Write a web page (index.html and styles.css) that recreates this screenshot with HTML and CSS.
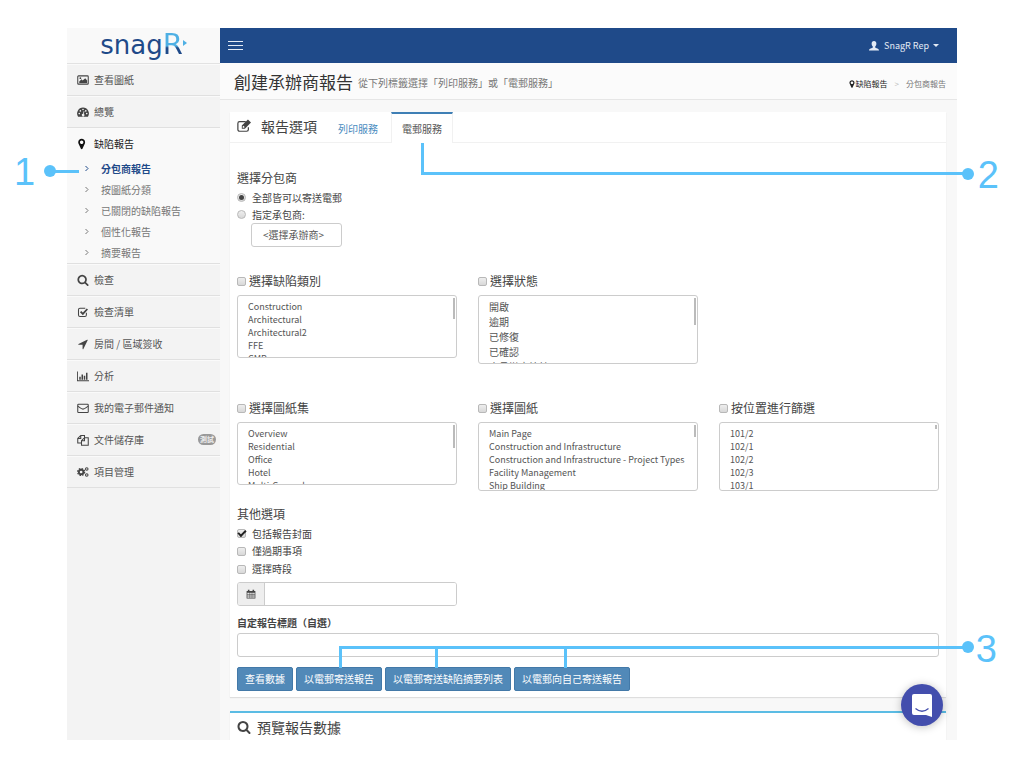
FILE: index.html
```html
<!DOCTYPE html>
<html lang="zh-Hant">
<head>
<meta charset="utf-8">
<title>snagR - 創建承辦商報告</title>
<link rel="stylesheet" href="styles.css">
</head>
<body>
<div class="stage">
  <div class="app">
    <aside class="sidebar">
      <a class="logo" href="#"><span class="logo-text">snag</span><span class="logo-r">R</span><svg class="logo-tip" viewBox="0 0 4 6"><path d="M0 0l4 3-4 3z"/></svg></a>
      <nav>
        <ul class="menu">
          <li><a class="menu-link" href="#"><svg class="icon line" viewBox="0 0 16 16"><rect x="1" y="2.5" width="14" height="11" rx="1"/><path class="solid" d="M3 12V10l3-3 1.500 1.500L11 5.500l2.500 3V12z"/><circle class="solid" cx="4.500" cy="5.500" r="1.200"/></svg>查看圖紙</a></li>
          <li><a class="menu-link" href="#"><svg class="icon" viewBox="0 0 16 16"><path fill-rule="evenodd" d="M8 2a8 8 0 0 0-6.600 12.300h13.200A8 8 0 0 0 8 2zM3 9a1.100 1.100 0 1 1 0 2.200A1.100 1.100 0 0 1 3 9zm1.500-3.600a1.100 1.100 0 1 1 0 2.200 1.100 1.100 0 0 1 0-2.200zM8 3.600a1.100 1.100 0 1 1 0 2.200 1.100 1.100 0 0 1 0-2.200zm1 3.200l.9.300-.9 3.400a1.700 1.700 0 1 1-1-.2zm2.700-1.400a1.100 1.100 0 1 1 0 2.200 1.100 1.100 0 0 1 0-2.200zM13 9a1.100 1.100 0 1 1 0 2.200A1.100 1.100 0 0 1 13 9z"/></svg>總覽</a></li>
          <li class="open">
            <a class="menu-link" href="#"><svg class="icon pin" viewBox="200 0 1792 1792"><path d="M1152 640q0-106-75-181t-181-75-181 75-75 181 75 181 181 75 181-75 75-181zm256 0q0 109-33 179l-364 774q-16 33-47.500 52t-67.500 19-67.500-19-46.500-52l-365-774q-33-70-33-179 0-212 150-362t362-150 362 150 150 362z"/></svg>缺陷報告</a>
            <ul class="submenu">
              <li><a class="current" href="#"><svg class="chev" viewBox="0 0 4 7"><path d="M.5 1l2.500 2.500L.5 6"/></svg>分包商報告</a></li>
              <li><a href="#"><svg class="chev" viewBox="0 0 4 7"><path d="M.5 1l2.500 2.500L.5 6"/></svg>按圖紙分類</a></li>
              <li><a href="#"><svg class="chev" viewBox="0 0 4 7"><path d="M.5 1l2.500 2.500L.5 6"/></svg>已關閉的缺陷報告</a></li>
              <li><a href="#"><svg class="chev" viewBox="0 0 4 7"><path d="M.5 1l2.500 2.500L.5 6"/></svg>個性化報告</a></li>
              <li><a href="#"><svg class="chev" viewBox="0 0 4 7"><path d="M.5 1l2.500 2.500L.5 6"/></svg>摘要報告</a></li>
            </ul>
          </li>
          <li><a class="menu-link" href="#"><svg class="icon" viewBox="0 0 1792 1792"><path d="M1216 832q0-185-131.500-316.500t-316.500-131.500-316.500 131.500-131.500 316.500 131.500 316.500 316.500 131.500 316.500-131.500 131.500-316.500zm512 832q0 52-38 90t-90 38q-54 0-90-38l-343-342q-179 124-399 124-143 0-273.500-55.500t-225-150-150-225-55.500-273.500 55.500-273.500 150-225 225-150 273.500-55.500 273.500 55.500 225 150 150 225 55.500 273.500q0 220-124 399l343 343q37 37 37 90z"/></svg>檢查</a></li>
          <li><a class="menu-link" href="#"><svg class="icon line" viewBox="0 0 16 16"><path d="M12.500 9v3a2 2 0 0 1-2 2H4a2 2 0 0 1-2-2V5a2 2 0 0 1 2-2h7"/><path class="thick" d="M4.800 7.500l3 3 6-6.500"/></svg>檢查清單</a></li>
          <li><a class="menu-link" href="#"><svg class="icon" viewBox="0 0 1792 1792"><path d="M1593 349l-640 1280q-17 35-57 35-5 0-15-2-22-5-35.500-22.500t-13.500-39.500v-576h-576q-22 0-39.500-13.500t-22.500-35.500 4-42 29-30l1280-640q13-7 29-7 27 0 45 19 15 14 18.500 34.500t-6.500 39.500z"/></svg>房間 / 區域簽收</a></li>
          <li><a class="menu-link" href="#"><svg class="icon" viewBox="0 0 16 16"><path d="M0 2h1.200v11.800H16V15H0zM3 9h2v4H3zM6 6h2v7H6zM9 7.500h2V13H9zM12 3.500h2V13h-2z"/></svg>分析</a></li>
          <li><a class="menu-link" href="#"><svg class="icon line" viewBox="0 0 16 16"><rect x="1" y="3" width="14" height="11" rx="1"/><path d="M1 5.500c3 2 4.500 4 7 4s4-2 7-4"/></svg>我的電子郵件通知</a></li>
          <li><a class="menu-link" href="#"><svg class="icon line" viewBox="0 0 16 16"><path d="M6 12H1V6l4-4h5v3M5 2v4H1M10 5h5v10H6V9l4-4v4H6"/></svg>文件儲存庫<span class="badge">測試</span></a></li>
          <li><a class="menu-link" href="#"><svg class="icon line" viewBox="0 0 16 16"><circle class="gear" cx="5.500" cy="8" r="3"/><circle class="teeth" cx="5.500" cy="8" r="4.700"/><circle cx="13" cy="4" r="1.700"/><circle cx="13" cy="12" r="1.700"/></svg>項目管理</a></li>
        </ul>
      </nav>
    </aside>

    <div class="main">
      <header class="topbar">
        <button class="burger" type="button" aria-label="選單"><span></span><span></span><span></span></button>
        <button class="user" type="button"><svg class="user-icon" viewBox="0 0 16 16"><path d="M8 0c2.500 0 3.800 1.800 3.800 4.200 0 1.800-.8 3.500-1.900 4.400v1.600c1 .9 6.100 1.600 6.100 4.800H0c0-3.200 5.100-3.900 6.100-4.800V8.600C5 7.700 4.200 6 4.200 4.200 4.200 1.800 5.500 0 8 0z"/></svg>SnagR Rep<span class="caret"></span></button>
      </header>

      <div class="titlebar">
        <h1>創建承辦商報告</h1>
        <span class="subtitle">從下列標籤選擇「列印服務」或「電郵服務」</span>
        <nav class="crumbs"><a href="#"><svg class="crumb-pin" viewBox="300 100 1200 1592"><path d="M1152 640q0-106-75-181t-181-75-181 75-75 181 75 181 181 75 181-75 75-181zm256 0q0 109-33 179l-364 774q-16 33-47.500 52t-67.500 19-67.500-19-46.500-52l-365-774q-33-70-33-179 0-212 150-362t362-150 362 150 150 362z"/></svg>缺陷報告</a><span class="sep">&gt;</span><span>分包商報告</span></nav>
      </div>

      <main class="content">
        <section class="panel">
          <div class="panel-head">
            <h2><svg class="head-icon line" viewBox="0 0 16 16"><path d="M13 9.500V12a2 2 0 0 1-2 2H3a2 2 0 0 1-2-2V5a2 2 0 0 1 2-2h7"/><path class="solid" fill-rule="evenodd" d="M5.500 7.500L12.500.5 16 4l-7 7H5.500zM6.500 8.500V10H8l.8-.8-1.500-1.500z"/></svg>報告選項</h2>
            <a class="tab" href="#">列印服務</a>
            <a class="tab active" href="#">電郵服務</a>
          </div>

          <form class="form">
            <h3>選擇分包商</h3>
            <label class="check"><input type="radio" name="sub" checked>全部皆可以寄送電郵</label>
            <label class="check"><input type="radio" name="sub">指定承包商:</label>
            <button class="picker" type="button">&lt;選擇承辦商&gt;</button>

            <div class="filters">
              <div class="filter">
                <label class="filter-label"><input type="checkbox">選擇缺陷類別</label>
                <div class="listbox"><select class="list short" multiple aria-label="缺陷類別"><option>Construction</option><option>Architectural</option><option>Architectural2</option><option>FFE</option><option>CMP</option></select><span class="thumb t21"></span></div>
              </div>
              <div class="filter">
                <label class="filter-label"><input type="checkbox">選擇狀態</label>
                <div class="listbox"><select class="list cjk" multiple aria-label="狀態"><option>開啟</option><option>逾期</option><option>已修復</option><option>已確認</option><option>由承辦商簽核</option></select><span class="thumb t27"></span></div>
              </div>
            </div>
            <div class="filters">
              <div class="filter">
                <label class="filter-label"><input type="checkbox">選擇圖紙集</label>
                <div class="listbox"><select class="list short" multiple aria-label="圖紙集"><option>Overview</option><option>Residential</option><option>Office</option><option>Hotel</option><option>Multi-General</option></select><span class="thumb t23"></span></div>
              </div>
              <div class="filter">
                <label class="filter-label"><input type="checkbox">選擇圖紙</label>
                <div class="listbox"><select class="list" multiple aria-label="圖紙"><option>Main Page</option><option>Construction and Infrastructure</option><option>Construction and Infrastructure - Project Types</option><option>Facility Management</option><option>Ship Building</option></select><span class="thumb t12"></span></div>
              </div>
              <div class="filter">
                <label class="filter-label"><input type="checkbox">按位置進行篩選</label>
                <div class="listbox"><select class="list" multiple aria-label="位置"><option>101/2</option><option>102/1</option><option>102/2</option><option>102/3</option><option>103/1</option></select><span class="thumb t4"></span></div>
              </div>
            </div>

            <h3>其他選項</h3>
            <label class="check"><input type="checkbox" checked>包括報告封面</label>
            <label class="check"><input type="checkbox">僅過期事項</label>
            <label class="check"><input type="checkbox">選擇時段</label>
            <div class="date">
              <span class="addon"><svg viewBox="0 0 16 16"><path fill-rule="evenodd" d="M1 3h2V1h2.500v2h5V1H13v2h2v12H1zM2.200 6v2h2.500V6zm3.300 0v2h2.200V6zm3 0v2h2.200V6zm3 0v2h2.300V6zM2.200 8.800v2h2.500v-2zm3.300 0v2h2.200v-2zm3 0v2h2.200v-2zm3 0v2h2.300v-2zM2.200 11.600v2.200h2.500v-2.200zm3.300 0v2.200h2.200v-2.200zm3 0v2.200h2.200v-2.200zm3 0v2.200h2.300v-2.200z"/></svg></span>
              <input type="text" aria-label="時段">
            </div>
            <label class="field-label" for="title">自定報告標題（自選）</label>
            <input class="field" id="title" type="text">
            <div class="actions">
              <button type="button">查看數據</button>
              <button type="button">以電郵寄送報告</button>
              <button type="button">以電郵寄送缺陷摘要列表</button>
              <button type="button">以電郵向自己寄送報告</button>
            </div>
          </form>
        </section>

        <section class="panel preview">
          <h2><svg class="head-icon" viewBox="0 0 1792 1792"><path d="M1216 832q0-185-131.500-316.500t-316.500-131.500-316.500 131.500-131.500 316.500 131.500 316.500 316.500 131.500 316.500-131.500 131.500-316.500zm512 832q0 52-38 90t-90 38q-54 0-90-38l-343-342q-179 124-399 124-143 0-273.500-55.500t-225-150-150-225-55.500-273.500 55.500-273.500 150-225 225-150 273.500-55.500 273.500 55.500 225 150 150 225 55.500 273.500q0 220-124 399l343 343q37 37 37 90z"/></svg>預覽報告數據</h2>
        </section>
      </main>
    </div>
  </div>

  <button class="chat" type="button" aria-label="聊天"><svg viewBox="0 0 20 23"><path class="bubble" d="M2 0h16a2 2 0 0 1 2 2v21l-6-2H2a2 2 0 0 1-2-2V2a2 2 0 0 1 2-2z"/><path class="smile" d="M3.500 14.500c4 3.400 9 3.400 13 0"/></svg></button>

  <div class="callout c1"><span class="num">1</span><i class="dot"></i><i class="bar"></i></div>
  <div class="callout c2"><i class="stem"></i><i class="bar"></i><i class="dot"></i><span class="num">2</span></div>
  <div class="callout c3"><i class="stem"></i><i class="stem s2"></i><i class="stem s3"></i><i class="bar"></i><i class="dot"></i><span class="num">3</span></div>
</div>
</body>
</html>
```
FILE: styles.css
```css
* { box-sizing: border-box; }
body {
  margin: 0;
  background: #fff;
  color: #444;
  font: 10px/16px "Noto Sans CJK TC", "Open Sans", sans-serif;
}
a { color: inherit; text-decoration: none; }
ul { list-style: none; margin: 0; padding: 0; }
h1, h2, h3 { margin: 0; font-weight: 400; }
button, input, select { font: inherit; color: inherit; }
svg { display: block; fill: currentColor; flex: none; }
.line { fill: none; stroke: currentColor; stroke-width: 1.4; }
.line .solid { fill: currentColor; stroke: none; }
.line .thick { stroke-width: 2.4; }
.line .gear { stroke-width: 2.4; }
.line .teeth { stroke-width: 1.6; stroke-dasharray: 2 1.7; }

.stage { position: relative; height: 100vh; padding: 28px 67px; overflow: hidden; }
.app { display: flex; height: 100%; overflow: hidden; background: #f8f8f8; }

/* Sidebar */
.sidebar { flex: none; width: 153px; background: #f3f3f3; color: #555; }
.logo {
  display: flex; align-items: baseline; justify-content: center;
  height: 36px; background: #f9f9f9; border-bottom: 1px solid #e2e2e2;
  font-family: "DejaVu Sans", sans-serif; line-height: 32px; color: #1f4a89;
}
.logo-text { font-size: 26px; }
.logo-r {
  font-size: 29px;
  background: linear-gradient(100deg, #4fb0e4 50%, #1f4a89 70%);
  background: linear-gradient(#4fb0e4 56%, #1f4a89 62%);
  -webkit-background-clip: text; background-clip: text; color: transparent;
}
.logo-tip { align-self: center; width: 4px; height: 6px; margin-bottom: 6px; color: #4fb0e4; }
.menu > li { border-bottom: 1px solid #e0e0e0; box-shadow: inset 0 1px #fafafa; }
.menu-link { display: flex; align-items: center; gap: 5px; height: 31px; padding: 0 4px 0 10px; }
.icon { width: 12px; height: 12px; color: #444; }
.icon.pin { color: #111; }
.menu > .open { background: #f9f9f9; }
.open > .menu-link { color: #222; }
.submenu { height: 104px; color: #777; }
.submenu a { display: flex; align-items: center; gap: 12px; height: 21px; padding: 0 0 2px 18px; }
.submenu .current { color: #1f4a89; font-weight: 700; }
.chev { width: 4px; height: 7px; fill: none; stroke: currentColor; }
.badge {
  margin-left: auto; padding: 0 2px; border-radius: 6px; background: #999; color: #eee;
  font-size: 7px; line-height: 11px; font-weight: 700;
}

/* Top bars */
.main { flex: 1; min-width: 0; }
.topbar {
  display: flex; align-items: center; justify-content: space-between;
  height: 35px; padding: 0 18px 0 8px; background: #1f4a89; color: #e4ebf5;
}
.topbar button { border: 0; padding: 0; background: none; }
.burger { display: flex; flex-direction: column; gap: 3px; }
.burger span { width: 15px; height: 1px; background: #e4ebf5; }
.user { display: flex; align-items: center; font-size: 9px; }
.user-icon { width: 10px; height: 10px; margin-right: 5px; }
.caret { margin-left: 4px; border: 3px solid transparent; border-top-color: #e4ebf5; border-bottom: 0; }
.titlebar {
  display: flex; align-items: center; gap: 5px; height: 37px; padding: 1px 11px 0 14px;
  background: #fbfbfb; border-bottom: 1px solid #e6e6e6;
}
.titlebar h1 { font-size: 17px; line-height: 24px; color: #333; }
.subtitle { color: #777; padding-top: 3px; }
.crumbs { display: flex; align-items: center; margin-left: auto; padding-top: 4px; font-size: 8px; color: #777; }
.crumbs a { display: flex; align-items: center; gap: 1px; color: #222; }
.crumb-pin { width: 6px; height: 8px; }
.sep { padding: 0 7px; color: #bbb; }

/* Panels */
.content { padding: 12px 11px 0 10px; }
.panel { background: #fff; box-shadow: 0 1px 1px rgba(0, 0, 0, .1); }
.panel-head { display: flex; height: 31px; padding-left: 7px; border-bottom: 1px solid #f1f1f1; }
.panel h2 { display: flex; align-items: center; gap: 10px; font-size: 14px; line-height: 28px; }
.panel-head h2 { height: 28px; }
.head-icon { width: 14px; height: 14px; }
.tab { height: 31px; padding: 2px 10px 0; line-height: 29px; color: #4a8cc0; }
.panel-head h2 + .tab { margin-left: 11px; }
.tab.active {
  margin-left: 3px; padding-top: 0; background: #fff; color: #555;
  border: 1px solid #f1f1f1; border-width: 2px 1px 0; border-top-color: #3f7fb5;
}
.preview { margin-top: 14px; padding-left: 7px; border-top: 2px solid #5bbce4; }
.preview h2 { gap: 6px; height: 27px; }

/* Form */
.form { padding: 26px 7px 6px; }
.form h3 { font-size: 12px; line-height: 18px; }
.check { display: flex; align-items: center; gap: 6px; height: 17px; }
h3 + .check { margin-top: 2px; }
.form input[type="checkbox"], .form input[type="radio"] {
  appearance: none; flex: none; display: grid; place-items: center;
  width: 9px; height: 9px; margin: 0; border: 1px solid #b8b8b8; border-radius: 2px;
  background: linear-gradient(#eee, #d8d8d8);
}
.form input[type="radio"] { border-radius: 50%; }
.form input[type="radio"]:checked::after { content: ""; width: 5px; height: 5px; border-radius: 50%; background: #444; }
.form input[type="checkbox"]:checked::after {
  content: ""; width: 6px; height: 3px; margin-top: -2px;
  border: solid #222; border-width: 0 0 2px 2px; transform: rotate(-45deg);
}
.picker {
  display: block; height: 24px; width: 91px; margin-left: 14px; padding: 0 11px;
  border: 1px solid #ccc; border-radius: 3px; background: #fff; color: #555;
  text-align: left; white-space: nowrap;
}
.filters { display: grid; grid-template-columns: repeat(3, 1fr); gap: 21px; height: 127px; align-items: start; }
.picker + .filters { margin-top: 25px; }
.filter-label { display: flex; align-items: center; gap: 3px; height: 18px; font-size: 12px; }
.listbox { position: relative; margin-top: 5px; }
.list {
  display: block; width: 100%; height: 69px; padding: 4px 8px; overflow: hidden;
  border: 1px solid #ccc; border-radius: 3px; background: #fff; color: #555;
  font-size: 9px; line-height: 13px; scrollbar-width: none; outline: 0;
}
.list.short { height: 63px; }
.list option { min-height: 0; height: 13px; padding: 0 2px; line-height: 13px; }
.list.cjk { padding-top: 3px; font-size: 10px; }
.list.cjk option { height: 15px; line-height: 14px; }
.thumb { position: absolute; top: 3px; right: 2px; width: 2px; background: #bbb; }
.t21 { height: 21px; }
.t27 { height: 27px; }
.t23 { height: 23px; }
.t12 { height: 12px; }
.t4 { height: 4px; }
.filters + h3 { margin-top: -21px; }
.filters ~ .check { height: 18px; }
.filters ~ h3 + .check { height: 17px; }
.date { display: flex; width: calc((100% - 42px) / 3); height: 24px; margin-top: 4px; border: 1px solid #ccc; border-radius: 3px; overflow: hidden; }
.addon { display: grid; place-items: center; width: 27px; background: #eee; border-right: 1px solid #ccc; }
.addon svg { width: 10px; height: 10px; color: #444; }
.date input { flex: 1; min-width: 0; padding: 0 8px; border: 0; outline: 0; }
.field-label { display: block; margin-top: 9px; font-weight: 700; }
.field { display: block; width: 100%; height: 24px; margin-top: 2px; padding: 0 8px; border: 1px solid #ccc; border-radius: 3px; }
.actions { display: flex; gap: 3px; margin-top: 10px; }
.actions button {
  height: 24px; padding: 0 7px; border: 1px solid #4379a8; border-radius: 2px;
  background: #5189b8; color: #fff; white-space: nowrap;
}

/* Chat launcher */
.chat {
  position: absolute; right: 81px; bottom: 42px; display: grid; place-items: center;
  width: 42px; height: 42px; padding: 0; border: 0; border-radius: 50%;
  background: #434ead; box-shadow: 0 1px 8px rgba(0, 0, 0, .25);
}
.chat svg { width: 20px; height: 23px; }
.bubble { fill: #fff; }
.smile { fill: none; stroke: #434ead; stroke-width: 1.3; }

/* Numbered callouts drawn over the app */
.callout { position: absolute; color: #5bc2fa; pointer-events: none; }
.callout > * { position: absolute; }
.bar, .stem, .dot { background: #5bc2fa; }
.dot { width: 12px; height: 12px; border-radius: 50%; }
.num { font: 38px/38px "Liberation Sans", Arial, sans-serif; }
.c1 { left: 14px; top: 152px; width: 65px; height: 40px; }
.c1 .num { left: 0; top: 1px; }
.c1 .dot { left: 30px; top: 13px; }
.c1 .bar { left: 36px; right: 0; top: 18px; height: 3px; }
.c2 { left: 421px; right: 24px; top: 143px; height: 50px; }
.c2 .stem { left: 0; top: 0; width: 3px; height: 32px; }
.c2 .bar { left: 0; right: 32px; top: 29px; height: 3px; }
.c2 .dot { right: 26px; top: 25px; }
.c2 .num { right: 1px; top: 13px; }
.c3 { left: 339px; right: 24px; top: 628px; height: 42px; }
.c3 .stem { left: 0; top: 18px; width: 3px; height: 22px; }
.c3 .s2 { left: 96px; }
.c3 .s3 { left: 225px; }
.c3 .bar { left: 0; right: 32px; top: 18px; height: 3px; }
.c3 .dot { right: 26px; top: 13px; }
.c3 .num { right: 3px; top: 2px; }
```
